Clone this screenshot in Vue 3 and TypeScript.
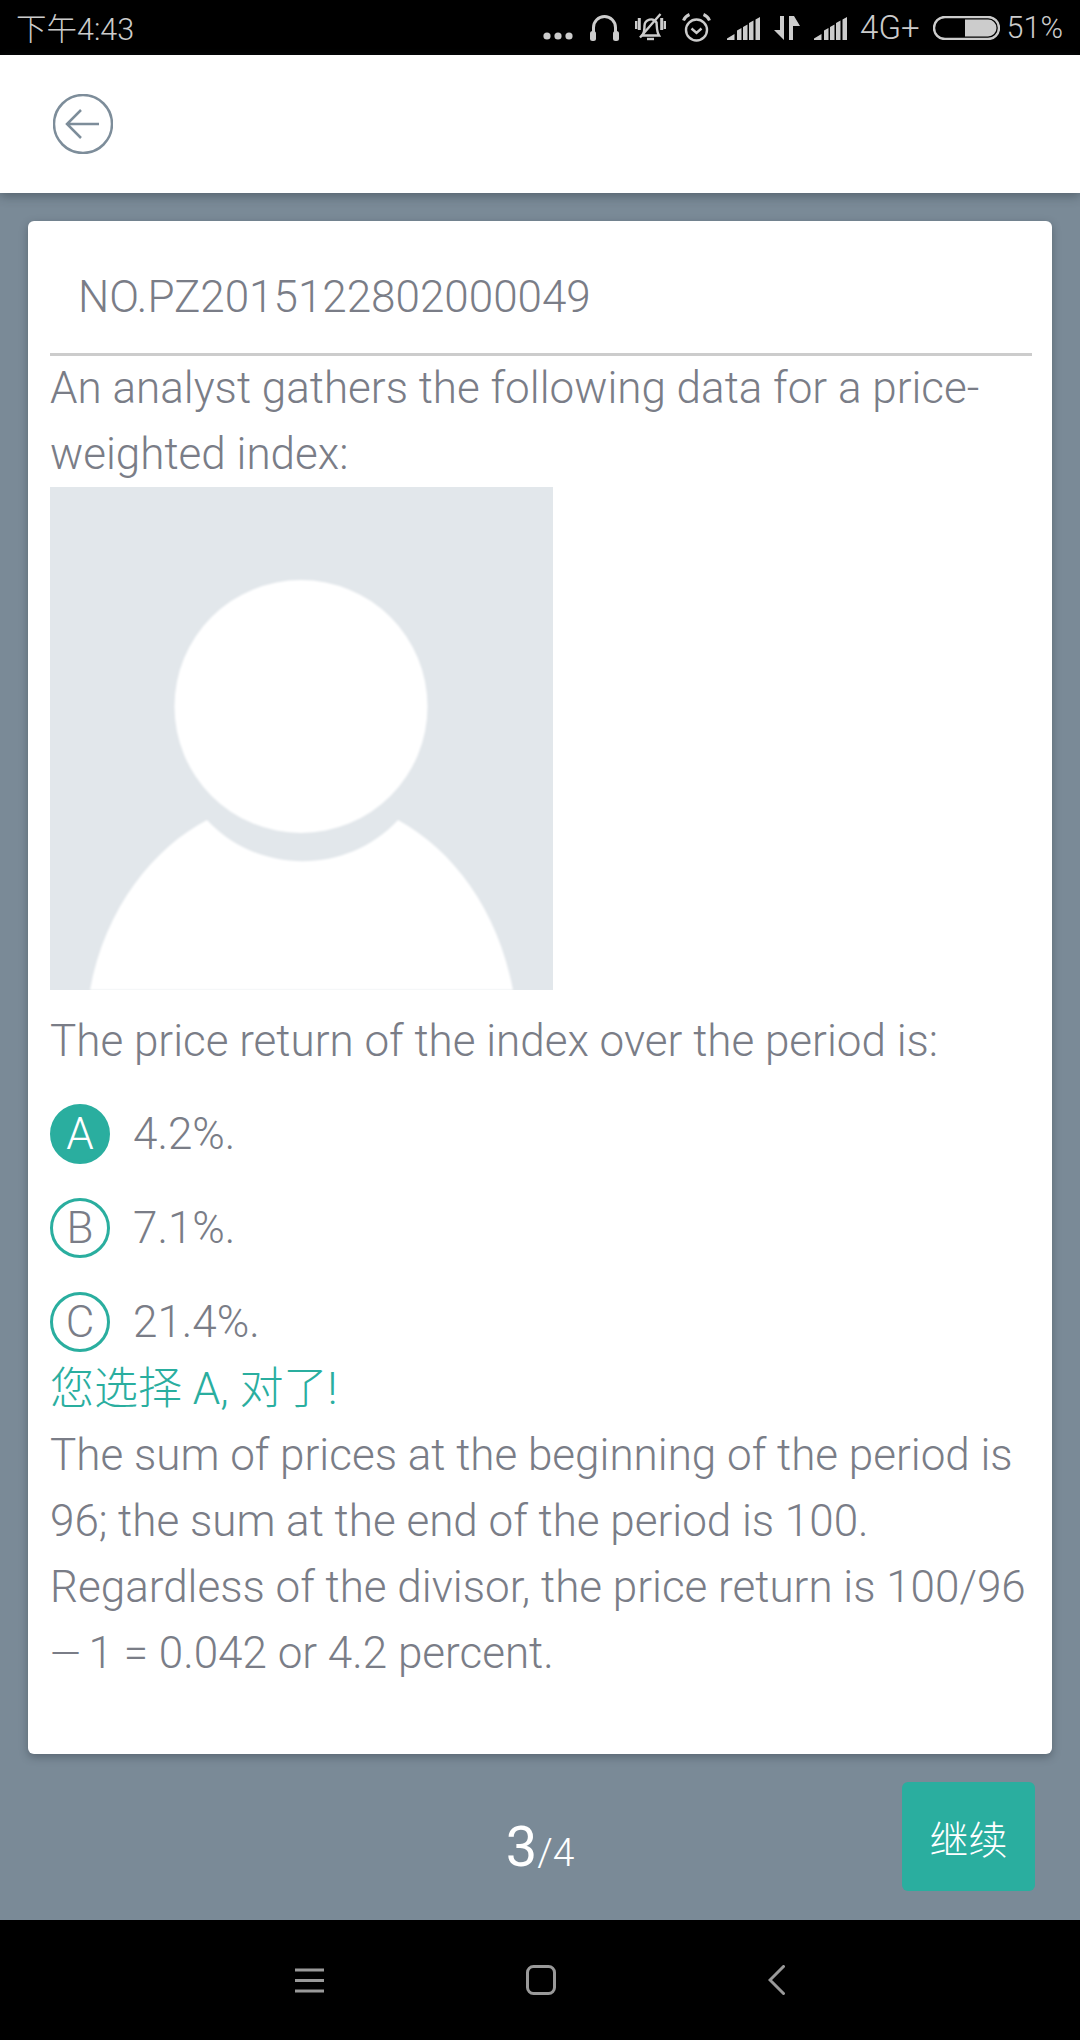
<script setup lang="ts">
interface Option { letter: string; text: string; selected: boolean }
const options: Option[] = [
  { letter: 'A', text: '4.2%.', selected: true },
  { letter: 'B', text: '7.1%.', selected: false },
  { letter: 'C', text: '21.4%.', selected: false },
]
</script>

<template>
  <div class="screen">
    <header class="status">
      <span class="time">下午4:43</span>
      <div class="status-right">
        <svg class="i-dots" viewBox="0 0 30 8"><circle cx="4" cy="4" r="3.6" /><circle cx="15" cy="4" r="3.6" /><circle cx="26" cy="4" r="3.6" /></svg>
        <svg class="i-head" viewBox="0 0 29 27"><path class="ln3" d="M3.500 20V13.500a11 11 0 0 1 22 0V20" /><rect x="0" y="17" width="6" height="10" rx="2.500" /><rect x="23" y="17" width="6" height="10" rx="2.500" /></svg>
        <svg class="i-bell" viewBox="0 0 31 29"><path class="ln" d="M7.500 22.500c1.500-2.500 2-5 2-10a6.500 6.500 0 0 1 12 -3c.5 4 0 9 2.500 13z" /><path class="ln" d="M12 26h7" /><path class="ln3" d="M.8 8v8M4.300 5v12M26.700 5v12M30.200 8v8" /><path class="ln" d="M5 24.500 25.500 1" /></svg>
        <svg class="i-alarm" viewBox="0 0 29 29"><circle class="ln" cx="14.500" cy="17" r="10.500" /><path class="ln3" d="M1.500 7.500c1-2.500 3.500-5 6-6M27.500 7.500c-1-2.500-3.500-5-6-6" /><path class="ln" d="M9.500 15.500l5 4.500 5-4.500" /></svg>
        <svg class="i-sig" viewBox="0 0 34 24"><path d="M0 24v-1.500L7.500 18v6zM10 24V14.500l4.500-2.500v12zM16 24V11l4.500-2.500V24zM22 24V7l4.500-2.500V24zM28.500 24V3.500L33 1v23z" /></svg>
        <svg class="i-arrows" viewBox="0 0 26 24"><path d="M6 0h4v24L0 14h6zM15 0h5l6 10h-7v14h-4z" /></svg>
        <svg class="i-sig" viewBox="0 0 34 24"><path d="M0 24v-1.500L7.500 18v6zM10 24V14.500l4.500-2.500v12zM16 24V11l4.500-2.500V24zM22 24V7l4.500-2.500V24zM28.500 24V3.500L33 1v23z" /></svg>
        <span class="net">4G+</span>
        <svg class="i-batt" viewBox="0 0 67 24"><rect class="ln" x="1" y="1" width="65" height="22" rx="11" /><path d="M32 3.500h23a8.500 8.500 0 0 1 0 17H32z" /></svg>
        <span class="pct">51%</span>
      </div>
    </header>

    <nav class="topbar">
      <svg class="back" viewBox="0 0 60 60"><circle cx="30" cy="30" r="29" /><path d="M14 30h32M28 16 14 30l14 14" /></svg>
    </nav>

    <main class="body">
      <article class="card">
        <h2 class="code">NO.PZ2015122802000049</h2>
        <div class="content">
          <p>An analyst gathers the following data for a price-weighted index:</p>
          <svg class="figure" viewBox="0 0 503 503">
            <rect width="503" height="503" fill="#e2e7eb" />
            <g class="soft">
              <circle cx="251" cy="219.500" r="126.500" fill="#fff" />
              <path d="M40 503C55 420 105 360 157 333c51 55 140 55 191 0 55 30 100 90 115 170z" fill="#fff" />
            </g>
          </svg>
          <p class="stem">The price return of the index over the period is:</p>
          <ul class="options">
            <li v-for="o in options" :key="o.letter" class="option">
              <span class="badge" :class="{ on: o.selected }">{{ o.letter }}</span>
              <span>{{ o.text }}</span>
            </li>
          </ul>
          <p class="result">您选择 A, 对了!</p>
          <p>The sum of prices at the beginning of the period is 96; the sum at the end of the period is 100. Regardless of the divisor, the price return is 100/96 <span class="dash">—</span> 1 = 0.042 or 4.2 percent.</p>
        </div>
      </article>
      <footer class="pager">
        <div class="count"><span class="cur">3</span><span class="tot">/4</span></div>
        <button class="next" type="button">继续</button>
      </footer>
    </main>

    <footer class="sysnav">
      <svg class="s-menu" viewBox="0 0 29 25"><path d="M0 2h29M0 12.500h29M0 23h29" /></svg>
      <svg class="s-home" viewBox="0 0 30 30"><rect x="1.500" y="1.500" width="27" height="27" rx="6" /></svg>
      <svg class="s-back" viewBox="0 0 17 30"><path d="M15.500 1.500 2 15l13.500 13.500" /></svg>
    </footer>
  </div>
</template>

<style>
html, body { margin: 0; background: #000; }
</style>

<style scoped>
.screen {
  width: 1080px;
  height: 2040px;
  display: flex;
  flex-direction: column;
  font-family: Roboto, "Noto Sans CJK SC", sans-serif;
  font-weight: 300;
  overflow: hidden;
}
.status {
  height: 55px;
  flex: none;
  background: #000;
  color: #ccc;
  display: flex;
  align-items: center;
  justify-content: space-between;
  padding: 0 17px 0 16px;
  font-size: 30.5px;
  box-sizing: border-box;
}
.time { margin-top: -1px; }
.status-right { display: flex; align-items: center; }
.status-right svg { fill: #ccc; display: block; flex: none; }
.ln { fill: none; stroke: #ccc; stroke-width: 2.4; }
.ln3 { fill: none; stroke: #ccc; stroke-width: 3; }
.i-dots { width: 30px; height: 8px; margin-top: 17px; }
.i-head { width: 29px; height: 27px; margin-left: 17px; }
.i-bell { width: 31px; height: 29px; margin-left: 16px; }
.i-alarm { width: 29px; height: 29px; margin-left: 16px; }
.i-sig { width: 34px; height: 24px; margin-left: 16px; }
.i-arrows { width: 26px; height: 24px; margin-left: 13px; }
.i-arrows + .i-sig { margin-left: 14px; }
.net { margin-left: 12px; font-size: 33px; }
.i-batt { width: 67px; height: 24px; margin-left: 13px; }
.pct { margin-left: 7px; font-size: 30.5px; }

.topbar {
  height: 138px;
  flex: none;
  background: #fff;
  display: flex;
  align-items: center;
  padding-left: 53px;
  position: relative;
  z-index: 1;
  box-shadow: 0 3px 10px rgba(40, 50, 60, 0.45);
}
.back { width: 60px; height: 60px; fill: none; stroke: #7d8d9a; stroke-width: 2.5; }

.body {
  flex: 1;
  background: #7a8a97;
  display: flex;
  flex-direction: column;
  padding: 28px 28px 0;
}
.card {
  height: 1533px;
  flex: none;
  box-sizing: border-box;
  background: #fff;
  border-radius: 6px;
  box-shadow: 0 3px 8px rgba(40, 50, 60, 0.4);
  padding: 0 20px 0 22px;
  color: #7a7d87;
  font-size: 44px;
  line-height: 66px;
}
.code {
  margin: 0;
  height: 135px;
  box-sizing: border-box;
  padding: 43px 0 0 28px;
  font-size: 44px;
  font-weight: 300;
  border-bottom: 3px solid #ccc;
}
.content { margin-top: -1px; }
.content p { margin: 0; }
.dash { font-size: 40px; letter-spacing: -3px; }
.figure { display: block; width: 503px; height: 503px; }
.soft { filter: blur(1px); }
.content .stem { margin-top: 18px; }
.options { list-style: none; margin: 0; padding: 0; }
.option {
  height: 60px;
  margin-top: 34px;
  display: flex;
  align-items: center;
  gap: 23px;
}
.option:first-child { margin-top: 30px; }
.badge {
  width: 60px;
  height: 60px;
  flex: none;
  box-sizing: border-box;
  border: 3px solid #2aae9f;
  border-radius: 50%;
  display: flex;
  align-items: center;
  justify-content: center;
}
.badge.on { background: #2aae9f; color: #fff; }
.content .result { color: #2aae9f; margin-top: 4px; }

.pager {
  position: relative;
  display: flex;
  justify-content: center;
  color: #fff;
}
.count { margin-top: 63px; display: flex; align-items: baseline; height: 60px; line-height: 60px; }
.cur { font-size: 56px; font-weight: 400; }
.tot { font-size: 39px; }
.next {
  position: absolute;
  top: 28px;
  right: 17px;
  width: 133px;
  height: 109px;
  border: 0;
  border-radius: 6px;
  background: #2aae9f;
  color: #fff;
  font: inherit;
  font-size: 39px;
  padding: 0;
}

.sysnav {
  height: 120px;
  flex: none;
  background: #000;
  display: flex;
  align-items: center;
  padding-left: 295px;
}
.sysnav svg { display: block; fill: none; stroke: #999; stroke-width: 3; flex: none; }
.s-menu { width: 29px; height: 25px; }
.s-home { width: 30px; height: 30px; margin-left: 202px; }
.s-back { width: 17px; height: 30px; margin-left: 212px; stroke-linecap: round; }
</style>
